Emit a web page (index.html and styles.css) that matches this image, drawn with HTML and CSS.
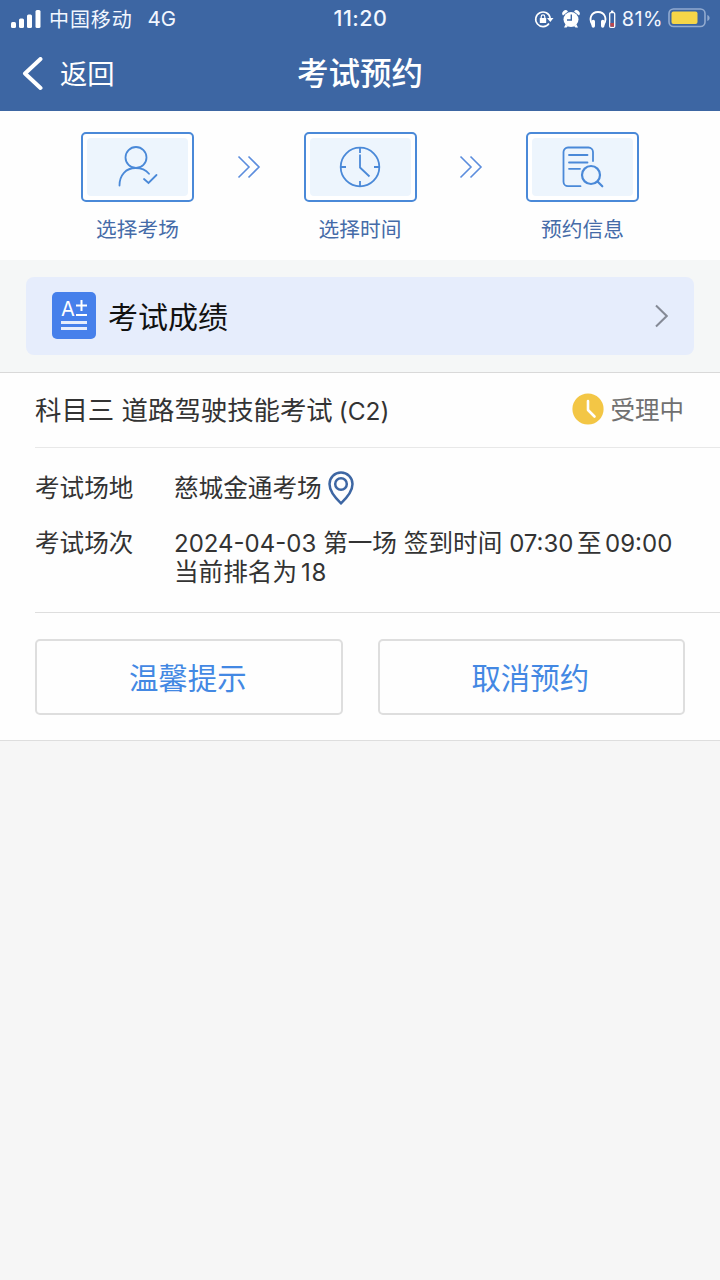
FILE: index.html
```
<!DOCTYPE html>
<html lang="zh-CN">
<head>
  <meta charset="UTF-8" />
  <meta name="viewport" content="width=device-width, initial-scale=1.0" />
  <title>考试预约</title>
  <link rel="stylesheet" href="styles.css">
</head>
<body>
  <header class="header">
    <div class="status-bar">
      <div class="status-left">
        <svg class="signal" width="30" height="18" viewBox="0 0 30 18" fill="#fff">
          <rect x="0" y="12" width="5" height="6" rx="1.5" />
          <rect x="8" y="8.500" width="5" height="9.500" rx="1.5" />
          <rect x="16" y="4.500" width="5" height="13.500" rx="1.5" />
          <rect x="24.500" y="0" width="5" height="18" rx="1.5" />
        </svg>
        <span class="carrier">中国移动</span>
        <span class="network">4G</span>
      </div>
      <div class="clock">11:20</div>
      <div class="status-right">
        <!-- rotation lock -->
        <svg class="lock" width="20" height="18" viewBox="0 0 20 18" fill="none" stroke="#fff" stroke-width="1.6">
          <path d="M15 13.500A7.300 7.300 0 1 1 16.200 8" />
          <path d="M13 8h6.500l-3.200 4z" fill="#fff" stroke="none" />
          <rect x="5.800" y="8" width="6.400" height="5" rx=".6" fill="#fff" stroke="none" />
          <path d="M7.200 8.500V6.700a1.800 1.800 0 0 1 3.600 0v1.800" stroke-width="1.200" />
        </svg>
        <!-- alarm -->
        <svg class="alarm" width="18" height="18" viewBox="0 0 18 18">
          <circle cx="9" cy="9.500" r="7.500" fill="#fff" />
          <path d="M1 5.500a3 3 0 0 1 5-4zM17 5.500a3 3 0 0 0-5-4zM3.500 14.500 2 17.500h2.500l1.500-1.500zM14.500 14.500l1.500 3h-2.500L12 16z" fill="#fff" />
          <path d="M9.300 4.500V10H5" fill="none" stroke="#3d66a3" stroke-width="1.400" />
        </svg>
        <!-- headphones with battery level -->
        <svg class="headphones" width="27" height="19" viewBox="0 0 27 19" fill="none" stroke="#fff">
          <path d="M3.500 15C-.500 9 2 2 9 2s9.500 7 5.500 13" stroke-width="1.900" />
          <path d="M4.300 11.500v4.500M13.700 11.500v4.500" stroke-width="3.400" stroke-linecap="round" />
          <rect x="20.700" y="2.700" width="5" height="14.600" rx="1" stroke-width="1.300" />
          <path d="M22 1.300h2.400" stroke-width="1.400" />
          <rect x="21.400" y="13" width="3.600" height="3.600" fill="#b8474f" stroke="none" />
        </svg>
        <span class="percent">81%</span>
        <svg class="battery" width="42" height="20" viewBox="0 0 42 20">
          <rect x="1" y="1" width="36" height="17.500" rx="4.500" fill="none" stroke="#92abd0" stroke-width="1.600" />
          <rect x="3.500" y="3.500" width="26" height="12.500" rx="2" fill="#f5d648" />
          <path d="M39.300 7v6c3-1 3-5 0-6z" fill="#92abd0" />
        </svg>
      </div>
    </div>
    <div class="nav">
      <a class="back">
        <svg width="22" height="34" viewBox="0 0 22 34" fill="none" stroke="#fff" stroke-width="4" stroke-linecap="round" stroke-linejoin="round">
          <path d="M18.500 2 3 16.500l15.500 14.500" />
        </svg>
        <span>返回</span>
      </a>
      <h1>考试预约</h1>
    </div>
  </header>

  <section class="steps">
    <div class="step">
      <div class="step-box">
        <div class="step-inner">
          <svg width="42" height="42" viewBox="0 0 42 42" fill="none" stroke="#4a89d8" stroke-width="1.800" stroke-linecap="round">
            <circle cx="19" cy="11.500" r="10.500" />
            <path d="M2.500 39.500C2.500 29 9 22 18.500 22c6 0 10.500 2 13.500 5.700" />
            <path d="M27 33l4.500 4 8-8" />
          </svg>
        </div>
      </div>
      <div class="step-name">选择考场</div>
    </div>
    <svg class="arrows" width="24" height="24" viewBox="0 0 24 24" fill="none" stroke="#5c8ddd" stroke-width="1.600">
      <path d="M1.500 1.500 12 12 1.500 22.500M11.500 1.500 22 12 11.500 22.500" />
    </svg>
    <div class="step">
      <div class="step-box">
        <div class="step-inner">
          <svg width="42" height="42" viewBox="0 0 42 42" fill="none" stroke="#4a89d8" stroke-width="1.800">
            <circle cx="21" cy="21" r="19.300" />
            <path d="M21 1.500v5.500M21 35v5.500M1.500 21H7M35 21h5.500" />
            <path d="M21 8.500V21.500l9.500 9" />
          </svg>
        </div>
      </div>
      <div class="step-name">选择时间</div>
    </div>
    <svg class="arrows" width="24" height="24" viewBox="0 0 24 24" fill="none" stroke="#5c8ddd" stroke-width="1.600">
      <path d="M1.500 1.500 12 12 1.500 22.500M11.500 1.500 22 12 11.500 22.500" />
    </svg>
    <div class="step">
      <div class="step-box">
        <div class="step-inner">
          <svg width="42" height="42" viewBox="0 0 42 42" fill="none" stroke="#4a89d8" stroke-width="1.800" stroke-linecap="round">
            <path d="M18.500 40.200H6a4.500 4.500 0 0 1-4.500-4.500V6A4.500 4.500 0 0 1 6 1.500h20.500A4.500 4.500 0 0 1 31 6v9" />
            <path d="M7 9h18.500M7 16.500h18.500M7 22.800h11" />
            <circle cx="29" cy="29" r="9" stroke-width="2.200" />
            <path d="M35.800 35.800l4.500 4.500" stroke-width="2.200" />
          </svg>
        </div>
      </div>
      <div class="step-name">预约信息</div>
    </div>
  </section>

  <section class="score-wrap">
    <a class="score">
      <div class="score-icon">
        <div class="grade">A<svg width="11" height="17" viewBox="0 0 11 17" stroke="#fff" stroke-width="2"><path d="M0 5.500h11M5.500 0v11M0 15h11" /></svg></div>
        <div class="line"></div>
        <div class="line"></div>
      </div>
      <span class="score-title">考试成绩</span>
      <svg width="14" height="24" viewBox="0 0 14 24" fill="none" stroke="#858a96" stroke-width="2">
        <path d="M2 1.500 12.700 12 2 22.500" />
      </svg>
    </a>
  </section>

  <section class="card">
    <div class="card-head">
      <div class="subject">科目三 道路驾驶技能考试<span class="code">(C2)</span></div>
      <div class="state">
        <svg width="32" height="32" viewBox="0 0 32 32">
          <circle cx="16" cy="16" r="15.600" fill="#f3c645" />
          <path d="M16 8v9l6.500 6.500" fill="none" stroke="#fff" stroke-width="2.600" stroke-linecap="round" stroke-linejoin="round" />
        </svg>
        <span>受理中</span>
      </div>
    </div>
    <div class="info">
      <div class="row site">
        <div class="label">考试场地</div>
        <div class="value place">慈城金通考场
          <svg width="26" height="34" viewBox="0 0 26 34" fill="none" stroke="#3d66a3" stroke-width="2.500">
            <path d="M13 32.300C9.500 29 1.500 21 1.500 13a11.500 11.500 0 0 1 23 0c0 8-8 16-11.500 19.300z" />
            <circle cx="13" cy="13" r="5.800" />
          </svg>
        </div>
      </div>
      <div class="row">
        <div class="label">考试场次</div>
        <div class="value">
          <div class="session"><span class="num">2024-04-03</span> 第一场 签到时间 <span class="num">07:30</span><span class="to">至</span><span class="num">09:00</span></div>
          <div>当前排名为<span class="rank">18</span></div>
        </div>
      </div>
    </div>
    <div class="actions">
      <button>温馨提示</button>
      <button>取消预约</button>
    </div>
  </section>
</body>
</html>
```
FILE: styles.css
```
* {
  box-sizing: border-box;
}

body {
  margin: 0;
  background-color: #f6f6f6;
  font-family: Inter, 'Noto Sans CJK SC', sans-serif;
  color: #333;
}

svg {
  display: block;
  flex: none;
}

.header {
  height: 111px;
  background-color: #3d66a3;
  color: #fff;
}

.status-bar {
  height: 36px;
  display: grid;
  grid-template-columns: 1fr auto 1fr;
  align-items: center;
  padding: 0 10px 0 11px;
  font-size: 20px;
  line-height: 36px;
  color: #f2f7ff;
}

.status-left,
.status-right {
  display: flex;
  align-items: center;
}

.signal {
  margin-bottom: 1px;
}

.carrier {
  margin-left: 8px;
  padding-top: 1px;
  letter-spacing: 0.9px;
}

.network {
  margin-left: 15px;
  font-size: 20.5px;
}

.clock {
  padding-bottom: 2px;
  font-size: 21.5px;
  font-weight: 500;
  letter-spacing: 0.5px;
}

.status-right {
  height: 35px;
  line-height: 35px;
  justify-content: flex-end;
}

.alarm {
  margin-left: 8px;
}

.headphones {
  margin-left: 9px;
}

.percent {
  margin-left: 6px;
  letter-spacing: 0.4px;
}

.battery {
  margin-left: 5px;
  margin-bottom: 2px;
}

.nav {
  height: 75px;
  display: grid;
  grid-template-columns: 1fr auto 1fr;
  align-items: center;
  padding: 0 22px;
}

.back {
  display: flex;
  align-items: center;
  gap: 16px;
  font-size: 27.3px;
  line-height: 34px;
}

.back span {
  padding-top: 2px;
}

.nav h1 {
  margin: 0;
  padding-bottom: 6px;
  font-size: 31.5px;
  font-weight: 500;
}

.steps {
  height: 149px;
  background: #fefefe;
  display: flex;
  justify-content: space-between;
  padding: 21px 81px 0;
}

.step-box {
  width: 113px;
  height: 70px;
  padding: 4px;
  border: 2px solid #4a89d8;
  border-radius: 5px;
  background: #fff;
}

.step-inner {
  height: 100%;
  display: flex;
  align-items: center;
  justify-content: center;
  border-radius: 4px;
  background: #edf5fd;
}

.step-name {
  margin-top: 13px;
  text-align: center;
  font-size: 20.7px;
  line-height: 30px;
  color: #456ba8;
}

.arrows {
  margin-top: 23px;
}

.score-wrap {
  height: 112px;
  padding: 17px 26px 0;
  background: #f5f7f7;
}

.score {
  height: 78px;
  display: flex;
  align-items: center;
  padding: 0 26px;
  border-radius: 8px;
  background: #e6edfc;
}

.score-icon {
  width: 44px;
  height: 47px;
  margin-bottom: 2px;
  padding: 8px 9px 0;
  border-radius: 5px;
  background: #4680eb;
  color: #fff;
}

.grade {
  height: 18px;
  display: flex;
  align-items: center;
  justify-content: space-between;
  font-size: 20px;
  line-height: 18px;
}

.line {
  height: 3px;
  margin-top: 3px;
  background: #e6edfc;
}

.score-title {
  flex: 1;
  margin-left: 12px;
  padding-bottom: 3px;
  font-size: 30px;
  color: #111;
}

.card {
  height: 369px;
  background: #fefefe;
  border-top: 1px solid #d9d9d9;
  border-bottom: 1px solid #dedede;
  padding-left: 35px;
}

.card-head {
  height: 75px;
  display: flex;
  align-items: center;
  justify-content: space-between;
  padding: 0 36px 2px 0;
  border-bottom: 1px solid #e8e8e8;
}

.subject {
  padding-bottom: 2px;
  font-size: 26.4px;
}

.code {
  margin-left: 6px;
  font-size: 24.5px;
}

.state {
  display: flex;
  align-items: center;
  gap: 7px;
  font-size: 24.5px;
  color: #707070;
}

.state span {
  padding-bottom: 2px;
}

.info {
  height: 165px;
  padding-top: 23px;
  border-bottom: 1px solid #dedede;
  font-size: 24.6px;
  line-height: 29px;
}

.row {
  display: flex;
}

.row + .row {
  margin-top: 24px;
}

.site {
  align-items: center;
}

.label {
  width: 139px;
}

.place {
  display: flex;
  align-items: center;
  gap: 6px;
}

.session {
  white-space: nowrap;
}

.num {
  font-size: 24px;
}

.to {
  margin: 0 3.500px;
}

.rank {
  margin-left: 4px;
  font-size: 24px;
  letter-spacing: 0.8px;
}

.actions {
  display: flex;
  gap: 35px;
  padding: 26px 35px 0 0;
}

button {
  flex: 1;
  height: 76px;
  padding: 0 2px 3px 0;
  border: 2px solid #dedede;
  border-radius: 5px;
  background: #fefefe;
  color: #4388e3;
  font-family: inherit;
  font-size: 29.4px;
}
```
